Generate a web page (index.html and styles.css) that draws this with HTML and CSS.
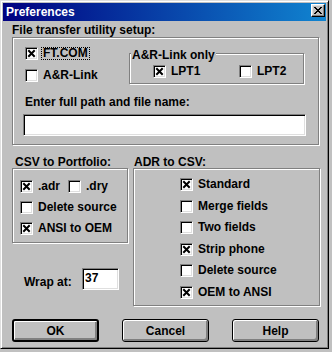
FILE: index.html
```html
<!DOCTYPE html>
<html>
  <head>
    <link rel="stylesheet" href="styles.css">
  </head>
  <body>
    <div class="window">
      <div class="titlebar">
        <p class="title">Preferences</p>
        <div class="grow"></div>
        <div class="close">
          <svg width="8" height="7" viewBox="0 0 8 7" shape-rendering="crispEdges">
            <path d="M0 0h2v1H0zM6 0h2v1H6zM1 1h2v1H1zM5 1h2v1H5zM2 2h4v1H2zM3 3h2v1H3zM2 4h4v1H2zM1 5h2v1H1zM5 5h2v1H5zM0 6h2v1H0zM6 6h2v1H6z"></path>
          </svg>
        </div>
      </div>

      <div class="content">
        <p class="heading">File transfer utility setup:</p>
        <div class="group setup">
          <div class="top">
            <div class="col-checks">
              <div class="check">
                <span class="box"><svg width="9" height="9" viewBox="0 0 9 9"><path d="M1.3 1.3l6.4 6.4M7.7 1.3L1.3 7.7"></path></svg></span>
                <span class="lbl focus">FT.COM</span>
              </div>
              <div class="check">
                <span class="box"></span>
                <span class="lbl">A&amp;R-Link</span>
              </div>
            </div>
            <div class="group lpt">
              <span class="legend">A&amp;R-Link only</span>
              <div class="lpt-row">
                <div class="check lpt1">
                  <span class="box"><svg width="9" height="9" viewBox="0 0 9 9"><path d="M1.3 1.3l6.4 6.4M7.7 1.3L1.3 7.7"></path></svg></span>
                  <span class="lbl">LPT1</span>
                </div>
                <div class="check">
                  <span class="box"></span>
                  <span class="lbl">LPT2</span>
                </div>
              </div>
            </div>
          </div>
          <p class="path-label">Enter full path and file name:</p>
          <div class="field path"></div>
        </div>

        <div class="lower">
          <div class="left">
            <p class="heading2 indent">CSV to Portfolio:</p>
            <div class="group portfolio">
              <div class="pair">
                <div class="check adr">
                  <span class="box"><svg width="9" height="9" viewBox="0 0 9 9"><path d="M1.3 1.3l6.4 6.4M7.7 1.3L1.3 7.7"></path></svg></span>
                  <span class="lbl">.adr</span>
                </div>
                <div class="check">
                  <span class="box"></span>
                  <span class="lbl">.dry</span>
                </div>
              </div>
              <div class="check">
                <span class="box"></span>
                <span class="lbl">Delete source</span>
              </div>
              <div class="check">
                <span class="box"><svg width="9" height="9" viewBox="0 0 9 9"><path d="M1.3 1.3l6.4 6.4M7.7 1.3L1.3 7.7"></path></svg></span>
                <span class="lbl">ANSI to OEM</span>
              </div>
            </div>
            <div class="wrap">
              <p class="wrap-label">Wrap at:</p>
              <div class="field wrap-field">37</div>
            </div>
          </div>

          <div class="right">
            <p class="heading2">ADR to CSV:</p>
            <div class="group adrcsv">
              <div class="check">
                <span class="box"><svg width="9" height="9" viewBox="0 0 9 9"><path d="M1.3 1.3l6.4 6.4M7.7 1.3L1.3 7.7"></path></svg></span>
                <span class="lbl">Standard</span>
              </div>
              <div class="check">
                <span class="box"></span>
                <span class="lbl">Merge fields</span>
              </div>
              <div class="check">
                <span class="box"></span>
                <span class="lbl">Two fields</span>
              </div>
              <div class="check">
                <span class="box"><svg width="9" height="9" viewBox="0 0 9 9"><path d="M1.3 1.3l6.4 6.4M7.7 1.3L1.3 7.7"></path></svg></span>
                <span class="lbl">Strip phone</span>
              </div>
              <div class="check">
                <span class="box"></span>
                <span class="lbl">Delete source</span>
              </div>
              <div class="check">
                <span class="box"><svg width="9" height="9" viewBox="0 0 9 9"><path d="M1.3 1.3l6.4 6.4M7.7 1.3L1.3 7.7"></path></svg></span>
                <span class="lbl">OEM to ANSI</span>
              </div>
            </div>
          </div>
        </div>

        <div class="buttons">
          <div class="btn default">OK</div>
          <div class="btn">Cancel</div>
          <div class="btn">Help</div>
        </div>
      </div>
    </div>
  </body>
</html>
```

FILE: styles.css
```css
* {
  margin: 0;
  padding: 0;
  box-sizing: border-box;
}

body {
  background: #c0c0c0;
  color: black;
  font-family: "Liberation Sans", Arial, sans-serif;
  font-weight: bold;
  font-size: 12px;
  line-height: 14px;
}

.window {
  width: 329px;
  height: 349px;
  border: 1px solid;
  border-color: #dfdfdf #000 #000 #dfdfdf;
  box-shadow: inset 1px 1px #fff, inset -1px -1px #808080;
  padding: 2px;
  display: flex;
  flex-direction: column;
}

.titlebar {
  height: 18px;
  display: flex;
  flex-direction: row;
  align-items: center;
  padding: 0 1px 0 3px;
  background: linear-gradient(to right, #000080, #1084d0);
  color: white;
}

.title {
  line-height: 14px;
}

.grow {
  flex-grow: 1;
}

.close {
  align-self: flex-start;
  margin-top: 1px;
  width: 14px;
  height: 13px;
  background: #c0c0c0;
  border: 1px solid;
  border-color: #fff #000 #000 #fff;
  box-shadow: inset -1px -1px #808080, inset 1px 1px #dfdfdf;
  display: flex;
  align-items: center;
  justify-content: center;
}

.content {
  display: flex;
  flex-direction: column;
  padding-left: 9px;
}

.heading {
  margin-top: 3px;
  line-height: 13px;
}

.group {
  border: 1px solid #808080;
  box-shadow: inset 1px 1px #fff, 1px 1px #fff;
}

.setup {
  width: 307px;
  padding-bottom: 8px;
}

.top {
  display: flex;
  flex-direction: row;
  align-items: flex-start;
  padding: 9px 0 0 12px;
}

.col-checks {
  width: 104px;
  display: flex;
  flex-direction: column;
  gap: 9px;
}

.check {
  display: flex;
  flex-direction: row;
  align-items: center;
  height: 13px;
  gap: 3px;
}

.box {
  width: 13px;
  height: 13px;
  flex-shrink: 0;
  background: #fff;
  border: 1px solid;
  border-color: #808080 #fff #fff #808080;
  box-shadow: inset 1px 1px #000, inset -1px -1px #dfdfdf;
  display: flex;
  align-items: center;
  justify-content: center;
}

.box path {
  stroke: #000;
  stroke-width: 2;
  fill: none;
}

.lbl {
  border: 1px dotted transparent;
  padding: 0 1px;
  line-height: 11px;
  white-space: nowrap;
}

.lbl.focus {
  border-color: #000;
}

.lpt {
  margin-top: 6px;
  width: 175px;
  display: flex;
  flex-direction: column;
  padding-bottom: 5px;
}

.legend {
  align-self: flex-start;
  margin: -6px 0 0 1px;
  padding: 0 1px;
  background: #c0c0c0;
}

.lpt-row {
  display: flex;
  flex-direction: row;
  margin-top: 3px;
  padding-left: 23px;
}

.lpt1 {
  width: 86px;
}

.path-label {
  margin-top: 11px;
  padding-left: 12px;
}

.field {
  background: #fff;
  border: 1px solid;
  border-color: #808080 #fff #fff #808080;
  box-shadow: inset 1px 1px #000, inset -1px -1px #dfdfdf;
}

.path {
  margin: 5px 0 0 10px;
  width: 283px;
  height: 22px;
}

.lower {
  display: flex;
  flex-direction: row;
  gap: 5px;
  margin-top: 11px;
}

.left {
  width: 116px;
  display: flex;
  flex-direction: column;
}

.right {
  width: 187px;
  display: flex;
  flex-direction: column;
}

.heading2 {
  line-height: 12px;
  padding-left: 1px;
}

.heading2.indent {
  padding-left: 3px;
}

.portfolio {
  display: flex;
  flex-direction: column;
  gap: 8px;
  padding: 11px 0 7px 7px;
}

.pair {
  display: flex;
  flex-direction: row;
}

.adr {
  width: 48px;
}

.wrap {
  display: flex;
  flex-direction: row;
  align-items: flex-start;
  margin-top: 25px;
  padding-left: 12px;
}

.wrap-label {
  margin-top: 7px;
  width: 58px;
}

.wrap-field {
  width: 37px;
  height: 22px;
  padding: 0 0 0 2px;
  line-height: 18px;
}

.adrcsv {
  display: flex;
  flex-direction: column;
  gap: 8.5px;
  padding: 9px 0 6.5px 46px;
}

.buttons {
  width: 307px;
  display: flex;
  flex-direction: row;
  justify-content: space-between;
  margin-top: 13px;
}

.btn {
  width: 87px;
  height: 23px;
  border: 1px solid #000;
  border-radius: 3px;
  box-shadow: inset 1px 1px #fff, inset -2px -2px #808080;
  display: flex;
  align-items: center;
  justify-content: center;
}

.btn.default {
  border-width: 2px;
}
```
